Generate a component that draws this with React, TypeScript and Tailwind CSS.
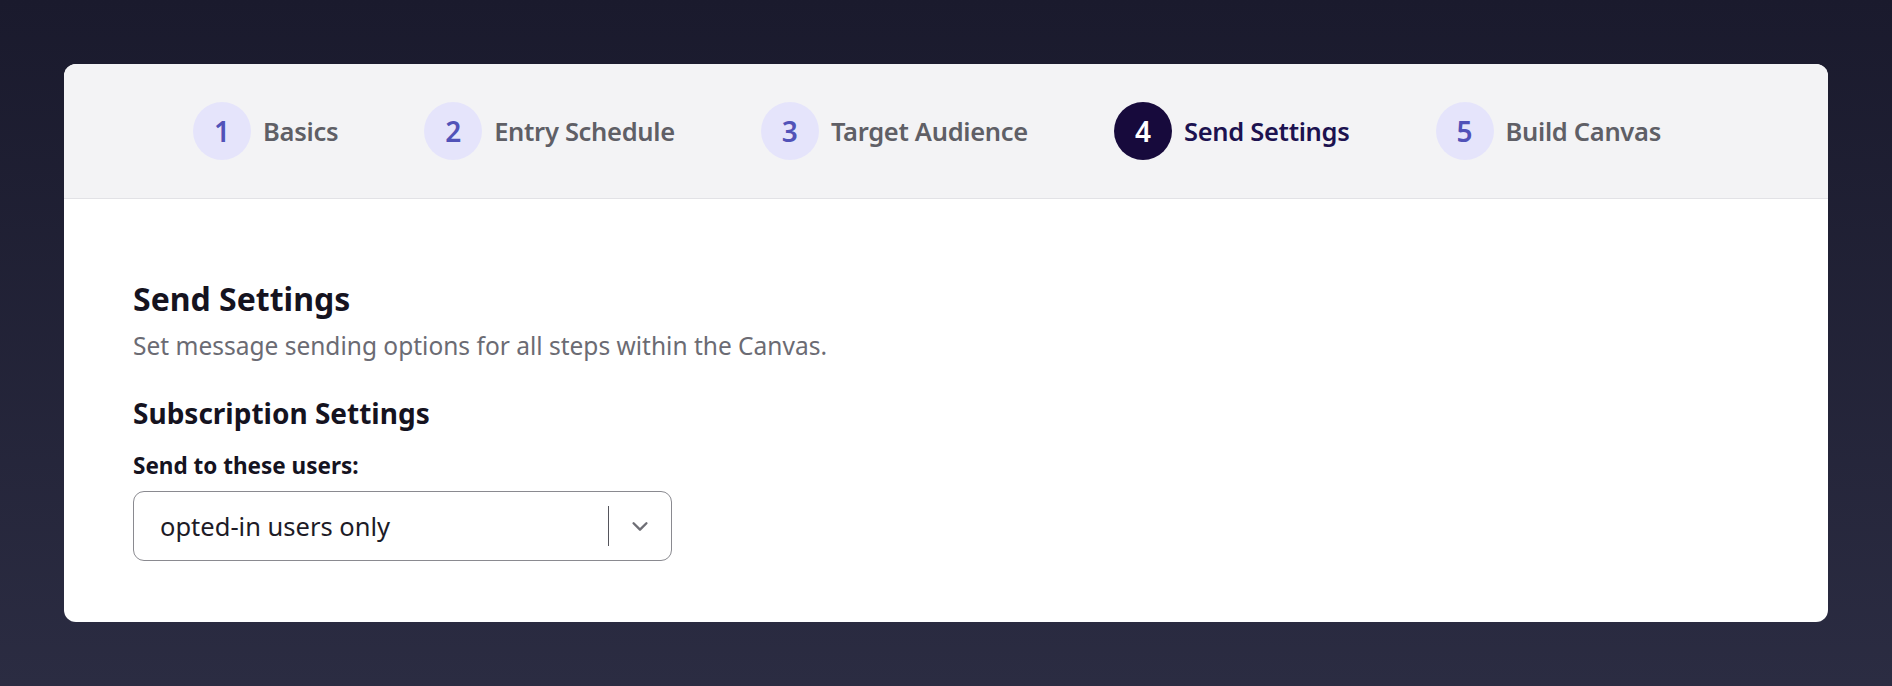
import React from "react";

const steps = ["Basics", "Entry Schedule", "Target Audience", "Send Settings", "Build Canvas"];

export default function App() {
  return (
    <div
      className="w-[1892px] h-[686px] bg-gradient-to-b from-[#1a1a2d] to-[#2b2c42] pt-[64px] px-[64px]"
      style={{ fontFamily: '"Noto Sans", "Open Sans", sans-serif' }}
    >
      <div className="bg-white rounded-[12px] overflow-hidden h-[558px]">
        <div className="h-[135px] bg-[#f3f3f5] border-b border-[#e2e2e6] flex items-center justify-center gap-[86px] pr-[38px]">
          {steps.map((s, i) => {
            const active = i === 3;
            return (
              <div key={s} className="flex items-center gap-[12px]">
                <div
                  className={`w-[58px] h-[58px] rounded-full flex items-center justify-center text-[28px] font-semibold ${
                    active ? "bg-[#170a3c] text-white" : "bg-[#e5e4fb] text-[#5152b8]"
                  }`}
                >
                  {i + 1}
                </div>
                <span
                  className={`text-[25.5px] font-semibold tracking-[-0.3px] ${
                    active ? "text-[#1c1250]" : "text-[#5f5f66]"
                  }`}
                >
                  {s}
                </span>
              </div>
            );
          })}
        </div>
        <div className="pl-[69px] pt-[80px]">
          <h1 className="text-[32px] font-bold text-[#15131f] leading-[40px]">Send Settings</h1>
          <p className="text-[24.5px] text-[#6b6b73] mt-[11px] leading-[32px]">
            Set message sending options for all steps within the Canvas.
          </p>
          <h2 className="text-[28px] font-bold text-[#15131f] mt-[33px] leading-[36px]">Subscription Settings</h2>
          <div className="text-[22.5px] font-bold text-[#15131f] mt-[21px] leading-[28px]">Send to these users:</div>
          <div className="mt-[11px] w-[539px] h-[70px] border border-[#8a8a90] rounded-[11px] flex items-center pl-[26px] pr-[20px]">
            <span className="flex-1 text-[25.5px] text-[#1d1b26]">opted-in users only</span>
            <div className="w-[1.5px] h-[40px] bg-[#55555c] mr-[20px]" />
            <svg width="22" height="22" viewBox="0 0 24 24" fill="none" stroke="#6e6e75" strokeWidth="2.6" strokeLinecap="round" strokeLinejoin="round">
              <path d="M5 9l7 7 7-7" />
            </svg>
          </div>
        </div>
      </div>
    </div>
  );
}
